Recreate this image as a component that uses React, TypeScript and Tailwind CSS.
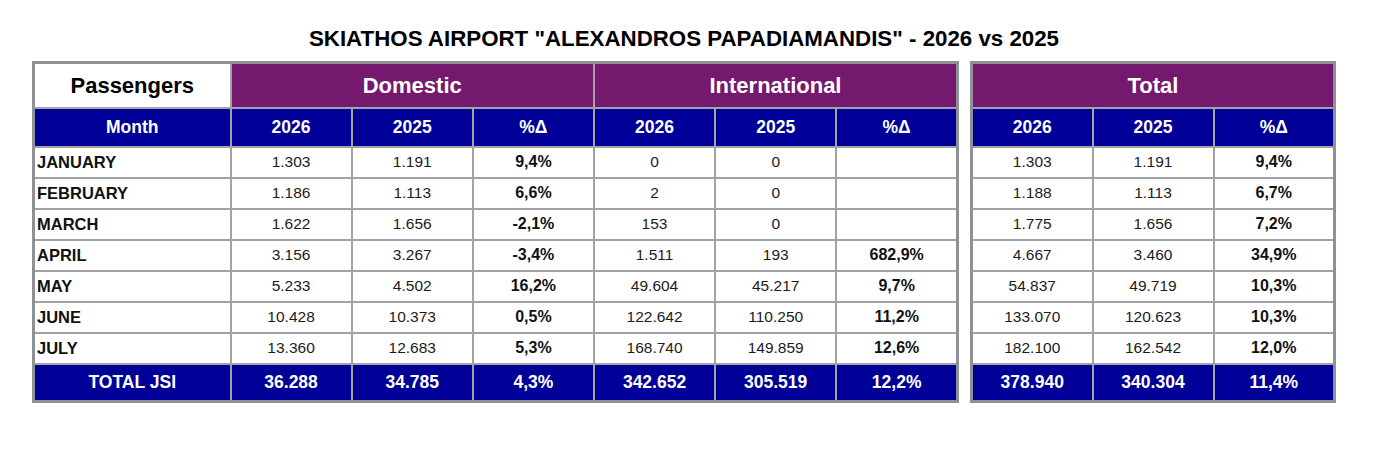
import React from "react";

type Row = { month: string; d: string[]; i: string[]; t: string[] };

const rows: Row[] = [
  { month: "JANUARY", d: ["1.303", "1.191", "9,4%"], i: ["0", "0", ""], t: ["1.303", "1.191", "9,4%"] },
  { month: "FEBRUARY", d: ["1.186", "1.113", "6,6%"], i: ["2", "0", ""], t: ["1.188", "1.113", "6,7%"] },
  { month: "MARCH", d: ["1.622", "1.656", "-2,1%"], i: ["153", "0", ""], t: ["1.775", "1.656", "7,2%"] },
  { month: "APRIL", d: ["3.156", "3.267", "-3,4%"], i: ["1.511", "193", "682,9%"], t: ["4.667", "3.460", "34,9%"] },
  { month: "MAY", d: ["5.233", "4.502", "16,2%"], i: ["49.604", "45.217", "9,7%"], t: ["54.837", "49.719", "10,3%"] },
  { month: "JUNE", d: ["10.428", "10.373", "0,5%"], i: ["122.642", "110.250", "11,2%"], t: ["133.070", "120.623", "10,3%"] },
  { month: "JULY", d: ["13.360", "12.683", "5,3%"], i: ["168.740", "149.859", "12,6%"], t: ["182.100", "162.542", "12,0%"] },
];

const total = { d: ["36.288", "34.785", "4,3%"], i: ["342.652", "305.519", "12,2%"], t: ["378.940", "340.304", "11,4%"] };

const cell = "border-2 border-[#a3a3a3] text-center";
const purple = "bg-[#74196d] text-white font-bold text-[22px]";
const blue = "bg-[#000099] text-white font-bold text-[17.5px]";

function Trio({ vals }: { vals: string[] }) {
  return (
    <>
      <td className={`${cell} text-[15.5px] text-[#1c1c1c]`}>{vals[0]}</td>
      <td className={`${cell} text-[15.5px] text-[#1c1c1c]`}>{vals[1]}</td>
      <td className={`${cell} text-[16px] font-bold text-[#111]`}>{vals[2]}</td>
    </>
  );
}

function SubHead() {
  return (
    <>
      <th className={`${cell} ${blue}`}>2026</th>
      <th className={`${cell} ${blue}`}>2025</th>
      <th className={`${cell} ${blue}`}>%Δ</th>
    </>
  );
}

function TotalTrio({ vals }: { vals: string[] }) {
  return (
    <>
      {vals.map((v, k) => (
        <td key={k} className={`${cell} ${blue}`}>{v}</td>
      ))}
    </>
  );
}

export default function App() {
  return (
    <div className="bg-white min-h-screen pt-[26px]" style={{ fontFamily: '"Liberation Sans", Arial, sans-serif' }}>
      <div className="ml-[32px] w-[1304px]">
        <h1 className="text-center text-[22.3px] font-bold leading-[26px] text-black mb-[9px]">
          SKIATHOS AIRPORT "ALEXANDROS PAPADIAMANDIS" - 2026 vs 2025
        </h1>
        <div className="flex gap-[11px] items-start">
          {/* Domestic + International */}
          <table className="table-fixed border-collapse border-[3px] border-[#8d9296] w-[927px]">
            <colgroup>
              <col className="w-[197px]" />
              {Array.from({ length: 6 }).map((_, k) => (
                <col key={k} />
              ))}
            </colgroup>
            <thead>
              <tr className="h-[45px]">
                <th className={`${cell} bg-white text-black font-bold text-[22px]`}>Passengers</th>
                <th colSpan={3} className={`${cell} ${purple}`}>Domestic</th>
                <th colSpan={3} className={`${cell} ${purple}`}>International</th>
              </tr>
              <tr className="h-[39px]">
                <th className={`${cell} ${blue}`}>Month</th>
                <SubHead />
                <SubHead />
              </tr>
            </thead>
            <tbody>
              {rows.map((r) => (
                <tr key={r.month} className="h-[31px]">
                  <td className="border-2 border-[#a3a3a3] pl-[2px] text-left text-[16.5px] font-bold text-[#111]">{r.month}</td>
                  <Trio vals={r.d} />
                  <Trio vals={r.i} />
                </tr>
              ))}
              <tr className="h-[38px]">
                <td className={`${cell} ${blue}`}>TOTAL JSI</td>
                <TotalTrio vals={total.d} />
                <TotalTrio vals={total.i} />
              </tr>
            </tbody>
          </table>

          {/* Total */}
          <table className="table-fixed border-collapse border-[3px] border-[#8d9296] w-[366px]">
            <thead>
              <tr className="h-[45px]">
                <th colSpan={3} className={`${cell} ${purple}`}>Total</th>
              </tr>
              <tr className="h-[39px]">
                <SubHead />
              </tr>
            </thead>
            <tbody>
              {rows.map((r) => (
                <tr key={r.month} className="h-[31px]">
                  <Trio vals={r.t} />
                </tr>
              ))}
              <tr className="h-[38px]">
                <TotalTrio vals={total.t} />
              </tr>
            </tbody>
          </table>
        </div>
      </div>
    </div>
  );
}
